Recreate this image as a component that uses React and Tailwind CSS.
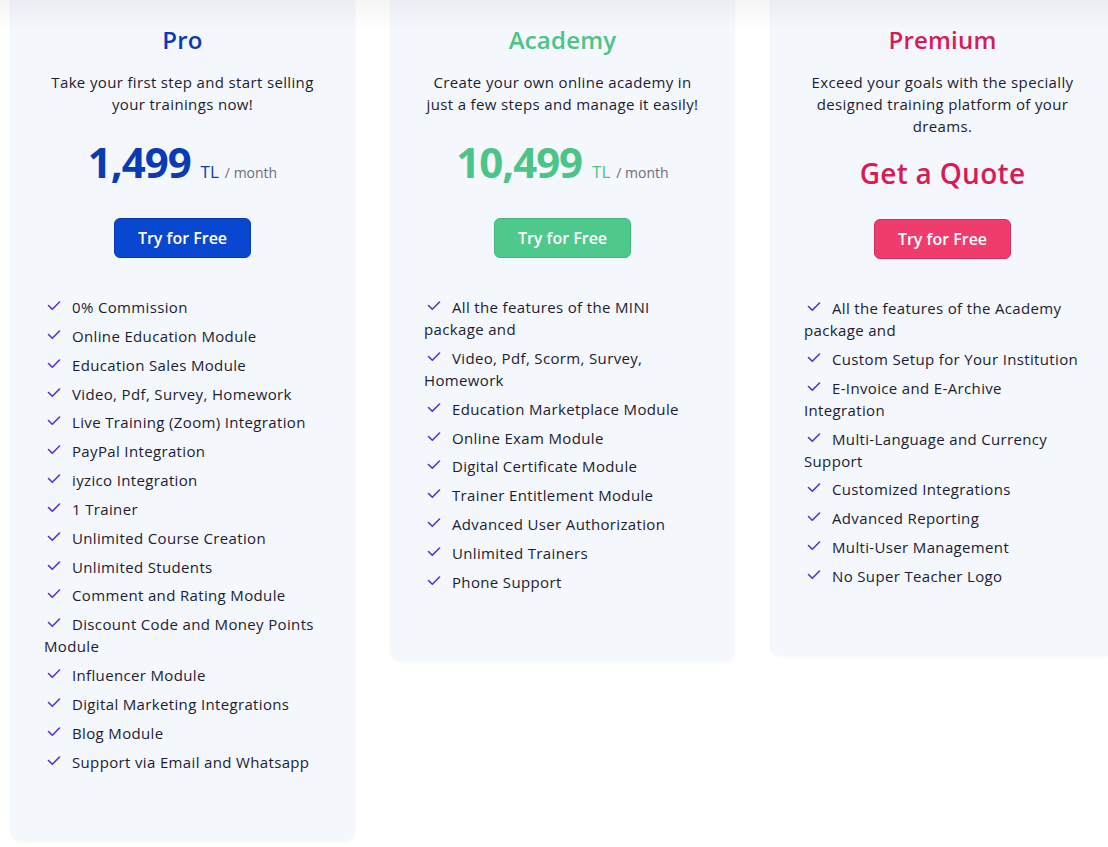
import React from "react";

const plans = [
  {
    name: "Pro",
    nameClass: "text-[#0b3bb3]",
    desc: "Take your first step and start selling your trainings now!",
    price: "1,499",
    priceClass: "text-[#0b3bb3]",
    buttonClass: "bg-[#0a47d0] border-[#0a3cb0]",
    features: [
      "0% Commission",
      "Online Education Module",
      "Education Sales Module",
      "Video, Pdf, Survey, Homework",
      "Live Training (Zoom) Integration",
      "PayPal Integration",
      "iyzico Integration",
      "1 Trainer",
      "Unlimited Course Creation",
      "Unlimited Students",
      "Comment and Rating Module",
      "Discount Code and Money Points Module",
      "Influencer Module",
      "Digital Marketing Integrations",
      "Blog Module",
      "Support via Email and Whatsapp",
    ],
  },
  {
    name: "Academy",
    nameClass: "text-[#4cc487]",
    desc: "Create your own online academy in just a few steps and manage it easily!",
    price: "10,499",
    priceClass: "text-[#4cc487]",
    buttonClass: "bg-[#4ec98b] border-[#45b87e]",
    features: [
      "All the features of the MINI package and",
      "Video, Pdf, Scorm, Survey, Homework",
      "Education Marketplace Module",
      "Online Exam Module",
      "Digital Certificate Module",
      "Trainer Entitlement Module",
      "Advanced User Authorization",
      "Unlimited Trainers",
      "Phone Support",
    ],
  },
  {
    name: "Premium",
    nameClass: "text-[#d81b58]",
    desc: "Exceed your goals with the specially designed training platform of your dreams.",
    quote: true,
    buttonClass: "bg-[#f03c6c] border-[#d42f5b]",
    features: [
      "All the features of the Academy package and",
      "Custom Setup for Your Institution",
      "E-Invoice and E-Archive Integration",
      "Multi-Language and Currency Support",
      "Customized Integrations",
      "Advanced Reporting",
      "Multi-User Management",
      "No Super Teacher Logo",
    ],
  },
];

const Check = () => (
  <svg
    width="14"
    height="10"
    viewBox="0 0 14 10"
    fill="none"
    className="inline-block align-[2px] mr-[11px] ml-[3px]"
  >
    <path d="M1.5 4.5l3.8 3.8L12.5 1" stroke="#5a2fd9" strokeWidth="1.6" strokeLinecap="round" strokeLinejoin="round" />
  </svg>
);

const PlanCard = ({ plan, heightClass }) => (
  <div className={`w-[345px] shrink-0 bg-[#f4f7fb] rounded-[10px] -mt-[20px] pt-[44px] shadow-[0_1px_3px_rgba(0,0,0,0.04)] ${heightClass}`}>
    <h2 className={`text-center text-[24px] leading-[32px] font-semibold tracking-[0.2px] ${plan.nameClass}`}>{plan.name}</h2>
    <p className="mt-[15px] px-[33px] text-center text-[15px] leading-[22px] tracking-[0.35px] text-[#1c1c33]">{plan.desc}</p>
    {plan.quote ? (
      <div className={`mt-[21px] h-[30px] leading-[30px] text-center text-[28px] font-semibold tracking-[0.3px] ${plan.nameClass}`}>
        Get a Quote
      </div>
    ) : (
      <div className="mt-[22px] h-[50px] flex items-baseline justify-center">
        <span className={`text-[42px] leading-[50px] font-bold tracking-tight ${plan.priceClass}`}>{plan.price}</span>
        <span className={`ml-[10px] text-[17px] ${plan.priceClass}`}>TL</span>
        <span className="ml-[6px] text-[14px] text-[#6f6f78]">/ month</span>
      </div>
    )}
    <div className="mt-[31px] flex justify-center">
      <button className={`w-[137px] h-[40px] rounded-[6px] border text-white text-[16px] font-semibold ${plan.buttonClass}`}>
        Try for Free
      </button>
    </div>
    <ul className="mt-[38px] pl-[34px] pr-[30px] text-[15px] leading-[22px] tracking-[0.35px] text-[#1c1c33]">
      {plan.features.map((f) => (
        <li key={f} className="mb-[6.85px]">
          <Check />
          {f}
        </li>
      ))}
    </ul>
  </div>
);

export default function App() {
  return (
    <div
      className="relative w-full h-[847px] overflow-hidden bg-white"
      style={{ fontFamily: '"Open Sans", "Noto Sans", sans-serif' }}
    >
      <div className="flex items-start gap-[35px] pl-[10px]">
        <PlanCard plan={plans[0]} heightClass="h-[861px]" />
        <PlanCard plan={plans[1]} heightClass="h-[681px]" />
        <PlanCard plan={plans[2]} heightClass="h-[676px]" />
      </div>
      <div className="absolute inset-x-0 top-0 h-[30px] bg-gradient-to-b from-[rgba(0,0,0,0.04)] to-transparent pointer-events-none" />
    </div>
  );
}
